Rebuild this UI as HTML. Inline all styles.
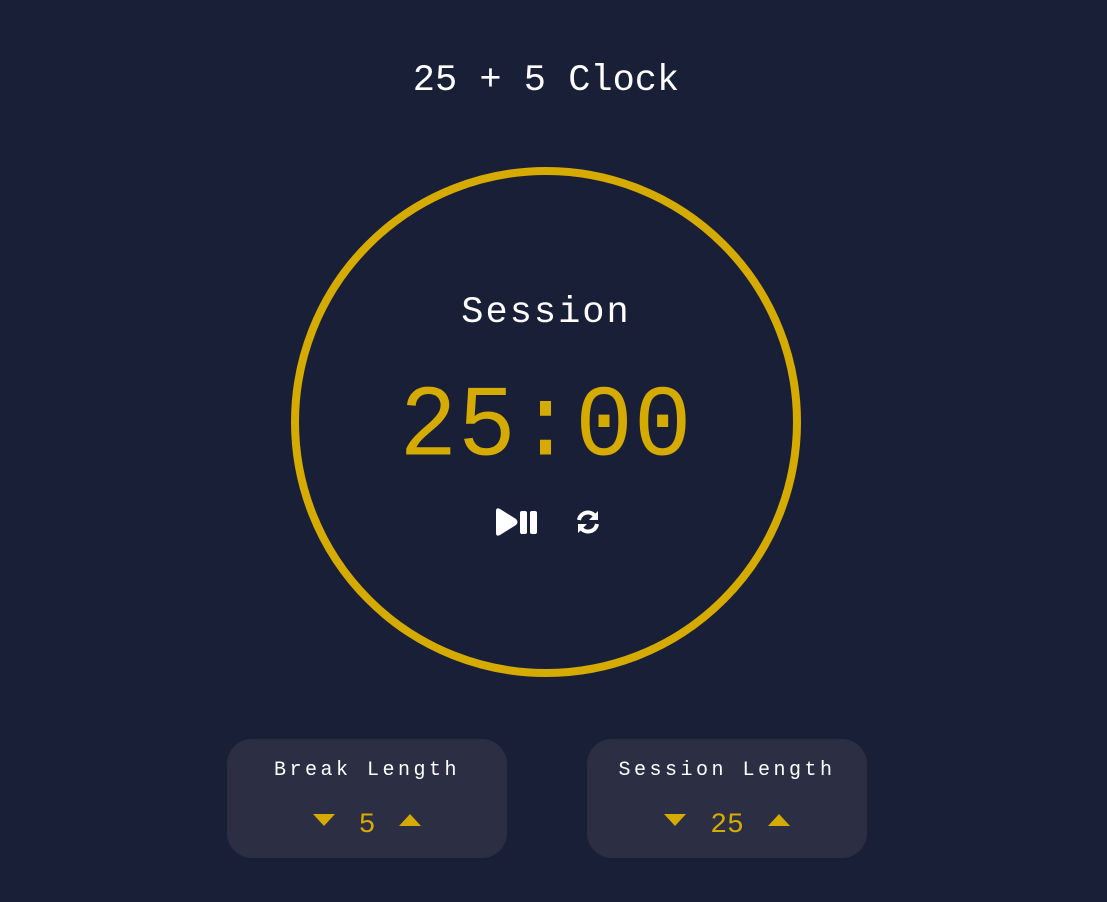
<!DOCTYPE html>
<html><head><style>
body{margin:0;width:1107px;height:902px;background:#1a1f38;font-family:"Liberation Mono",monospace;color:#fff;position:relative;overflow:hidden}
.a{position:absolute;text-align:center;white-space:nowrap}
.circle{position:absolute;left:291px;top:167px;width:494px;height:494px;border:8px solid #d6ab00;border-radius:50%}
.box{position:absolute;top:739px;width:280px;height:119px;background:#2c2e44;border-radius:25px}
.lbl{position:absolute;left:0;right:0;top:20px;text-align:center;font-size:20px;letter-spacing:3.5px}
.num{position:absolute;top:71px;font-size:28px;color:#d6ab00;width:60px;text-align:center}
.dn{position:absolute;top:75px;width:0;height:0;border-left:11px solid transparent;border-right:11px solid transparent;border-top:12px solid #d6ab00}
.up{position:absolute;top:75px;width:0;height:0;border-left:11px solid transparent;border-right:11px solid transparent;border-bottom:12px solid #d6ab00}
</style></head><body>
<div class="a" style="left:0;width:1092px;top:60px;font-size:37px;">25 + 5 Clock</div>
<div class="circle"></div>
<div class="a" style="left:0;width:1092px;top:292px;font-size:37px;letter-spacing:2px">Session</div>
<div class="a" style="left:0;width:1092px;top:378px;font-size:96px;letter-spacing:1px;color:#d6ab00;transform:scaleY(1.05);transform-origin:center top;line-height:96px">25:00</div>
<svg class="a" style="left:493px;top:507px" width="52" height="30" viewBox="0 0 52 30">
<path d="M3 4 L3 26 Q3 30 7 28 L23 18 Q26 15 23 12 L7 2 Q3 0 3 4Z" fill="#fff"/>
<rect x="27" y="4" width="7" height="23" rx="2" fill="#fff"/>
<rect x="37" y="4" width="7" height="23" rx="2" fill="#fff"/>
</svg>
<svg class="a" style="left:574px;top:508px" width="28" height="28" viewBox="0 0 28 28">
<path d="M5 12 A9 9 0 0 1 21 8" stroke="#fff" stroke-width="4" fill="none"/>
<path d="M24 3 L24 12 L15 12Z" fill="#fff"/>
<path d="M23 16 A9 9 0 0 1 7 20" stroke="#fff" stroke-width="4" fill="none"/>
<path d="M4 25 L4 16 L13 16Z" fill="#fff"/>
</svg>
<div class="box" style="left:227px">
<div class="lbl">Break Length</div>
<div class="dn" style="left:86px"></div>
<div class="num" style="left:110px">5</div>
<div class="up" style="left:172px"></div>
</div>
<div class="box" style="left:587px">
<div class="lbl">Session Length</div>
<div class="dn" style="left:77px"></div>
<div class="num" style="left:110px">25</div>
<div class="up" style="left:181px"></div>
</div>
</body></html>
